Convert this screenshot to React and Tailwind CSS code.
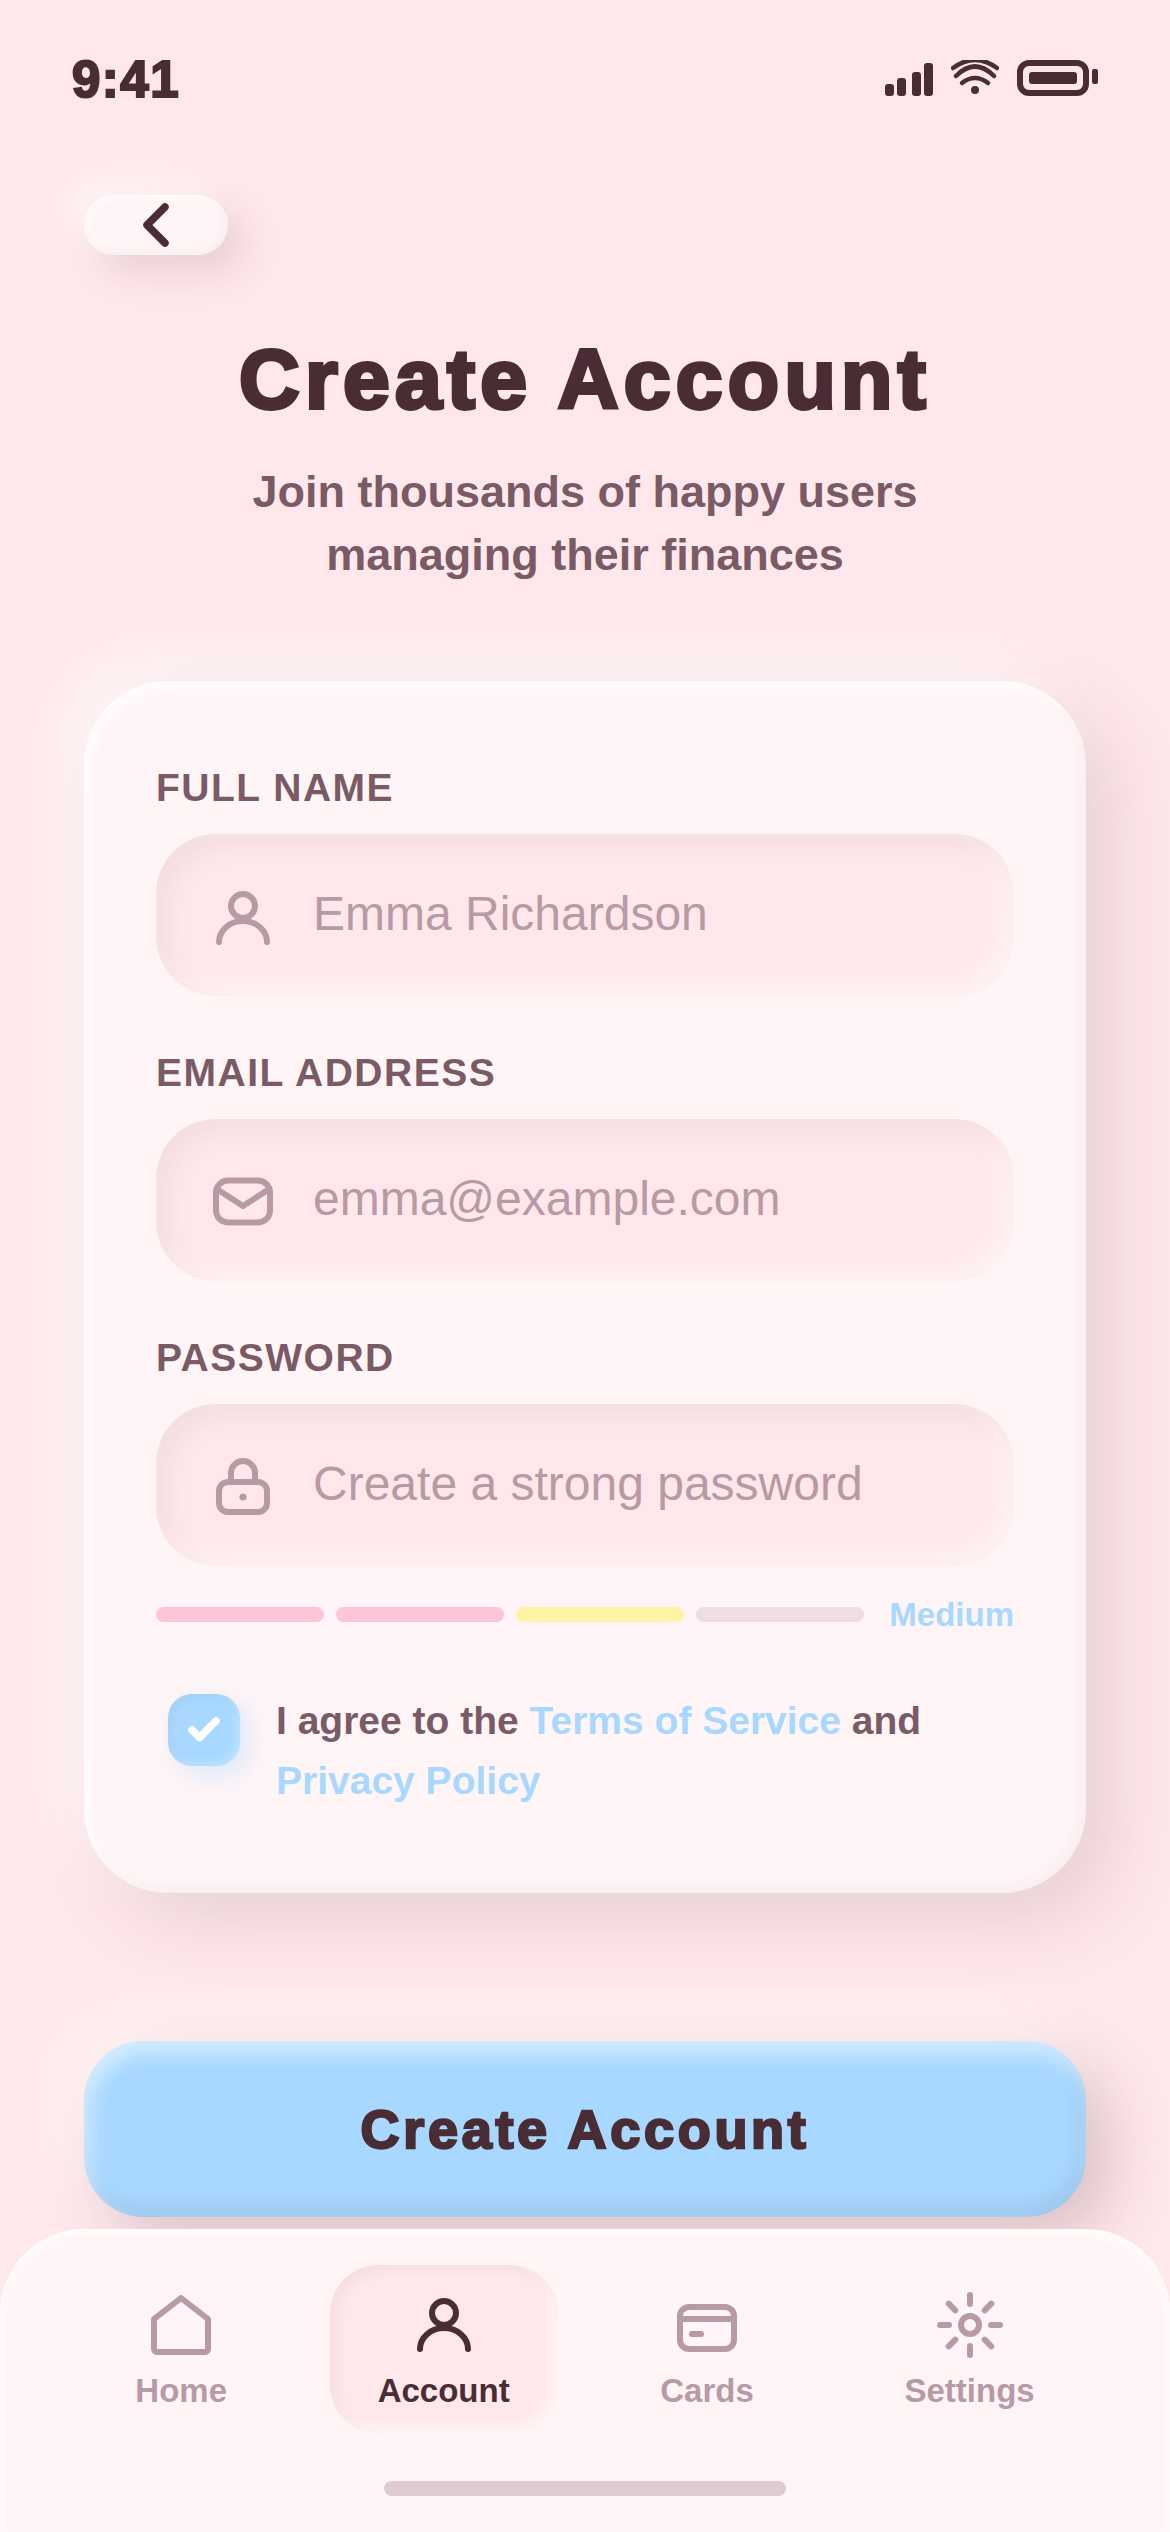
import React from "react";

const dark = "#4a2c35";

const Field = ({ label, placeholder, icon }) => (
  <div className="mb-[54px]">
    <div className="text-[39px] leading-[45px] font-bold tracking-[1.5px] text-[#7a5a65] mb-[24px]">{label}</div>
    <div className="h-[162px] rounded-[60px] bg-[#ffe8eb] flex items-center pl-[51px] shadow-[inset_12px_12px_24px_rgba(74,44,53,0.06),inset_-12px_-12px_24px_rgba(255,255,255,0.45)]">
      <div className="w-[72px] h-[72px] mt-[6px]">{icon}</div>
      <span className="ml-[34px] -mt-[2px] text-[48px] text-[#b89aa5]">{placeholder}</span>
    </div>
  </div>
);

const iconProps = {
  fill: "none",
  stroke: "currentColor",
  strokeWidth: 2,
  strokeLinecap: "round",
  strokeLinejoin: "round",
  viewBox: "0 0 24 24",
};

const UserIcon = ({ className }) => (
  <svg {...iconProps} className={className}>
    <circle cx="12" cy="8" r="4" />
    <path d="M4 20a8 7 0 0 1 16 0" />
  </svg>
);

const MailIcon = ({ className }) => (
  <svg {...iconProps} className={className}>
    <rect x="3" y="4.500" width="18" height="14" rx="4" />
    <path d="M3.500 7.500L12 13l8.500-5.500" />
  </svg>
);

const LockIcon = ({ className }) => (
  <svg {...iconProps} className={className}>
    <rect x="4" y="10" width="16" height="10" rx="3" />
    <path d="M8 10V7a4 4 0 0 1 8 0v3" />
    <circle cx="12" cy="15" r="1.200" fill="currentColor" stroke="none" />
  </svg>
);

const HomeIcon = ({ className }) => (
  <svg {...iconProps} className={className}>
    <path d="M3 10l9-7 9 7v10a1 1 0 0 1-1 1H4a1 1 0 0 1-1-1z" />
  </svg>
);

const CardIcon = ({ className }) => (
  <svg {...iconProps} className={className}>
    <rect x="3" y="6" width="18" height="14" rx="3" />
    <path d="M3 10h18M7 15h3" />
  </svg>
);

const GearIcon = ({ className }) => (
  <svg {...iconProps} className={className}>
    <circle cx="12" cy="12" r="3" />
    <path d="M12 2v3M12 19v3M4.900 4.900l2.200 2.200M16.900 16.900l2.200 2.200M2 12h3M19 12h3M4.900 19.100l2.200-2.200M16.900 7.100l2.200-2.200" />
  </svg>
);

const NavItem = ({ label, Icon, active }) => (
  <div
    className={`h-[168px] rounded-[48px] px-[48px] pt-[24px] flex flex-col items-center gap-[12px] ${
      active
        ? "bg-[#ffe8eb] text-[#4a2c35] shadow-[inset_6px_6px_12px_rgba(74,44,53,0.05),inset_-6px_-6px_12px_rgba(255,255,255,0.5)]"
        : "text-[#b89aa5]"
    }`}
  >
    <Icon className="w-[72px] h-[72px]" />
    <span className="text-[33px] leading-[36px] font-bold">{label}</span>
  </div>
);

export default function App() {
  return (
    <div className="relative w-[1170px] h-[2532px] overflow-hidden bg-[#ffe8eb] font-['Liberation_Sans',Arial,sans-serif]">
      {/* Status bar */}
      <div className="flex items-start justify-between pt-[54px] pl-[72px] pr-[72px] h-[132px]" style={{ color: dark }}>
        <span className="text-[51px] font-bold leading-[51px] tracking-[1.5px] [-webkit-text-stroke:2.200px_#4a2c35]">9:41</span>
        <div className="flex items-start gap-[18px] mt-[6px]">
          <svg width="48" height="36" viewBox="0 0 48 36" fill="currentColor">
            <rect x="0" y="24" width="9" height="12" rx="3" />
            <rect x="12" y="18" width="9" height="18" rx="3" />
            <rect x="27" y="12" width="9" height="24" rx="3" />
            <rect x="39" y="3" width="9" height="33" rx="3" />
          </svg>
          <svg width="48" height="36" viewBox="0 0 48 36" fill="none" stroke="currentColor" strokeWidth="4.500" strokeLinecap="round">
            <path d="M2 8Q24 -8 46 8" />
            <path d="M5 16Q24 -3 43 16" />
            <path d="M11 23Q24 13 37 23" />
            <circle cx="24" cy="30" r="4" fill="currentColor" stroke="none" />
          </svg>
          <svg width="81" height="36" viewBox="0 0 81 36" fill="currentColor">
            <rect x="3" y="3" width="66" height="30" rx="9" fill="none" stroke="currentColor" strokeWidth="6" />
            <rect x="12" y="12" width="48" height="12" rx="3" />
            <rect x="75" y="9" width="6" height="15" rx="2" />
          </svg>
        </div>
      </div>

      {/* Back button */}
      <div className="ml-[84px] mt-[63px] w-[144px] h-[60px] rounded-[30px] bg-[#fff5f7] flex items-center justify-center shadow-[18px_18px_36px_rgba(74,44,53,0.12),-18px_-18px_36px_rgba(255,255,255,0.5),inset_3px_3px_9px_rgba(255,255,255,0.6),inset_-3px_-3px_9px_rgba(74,44,53,0.04)]" style={{ color: dark }}>
        <svg width="72" height="72" viewBox="0 0 24 24" fill="none" stroke="currentColor" strokeWidth="2.500" strokeLinecap="round" strokeLinejoin="round" className="shrink-0">
          <path d="M15 6l-6 6 6 6" />
        </svg>
      </div>

      {/* Heading */}
      <div className="mt-[78px] text-center">
        <h1 className="text-[84px] leading-[93px] font-bold tracking-[5.300px] text-[#4a2c35] [-webkit-text-stroke:3.800px_#4a2c35]">Create Account</h1>
        <p className="mt-[34px] text-[45px] leading-[63px] font-bold text-[#7a5a65]">
          Join thousands of happy users
          <br />
          managing their finances
        </p>
      </div>

      {/* Form card */}
      <div className="mx-[84px] mt-[95px] h-[1212px] rounded-[84px] bg-[#fff5f7] px-[72px] pt-[84px] shadow-[30px_30px_72px_rgba(74,44,53,0.12),-24px_-24px_60px_rgba(255,255,255,0.6),inset_6px_6px_12px_rgba(255,255,255,0.8),inset_-6px_-6px_12px_rgba(74,44,53,0.03)]">
        <Field label="FULL NAME" placeholder="Emma Richardson" icon={<UserIcon className="w-[72px] h-[72px] text-[#b89aa5]" />} />
        <Field label="EMAIL ADDRESS" placeholder="emma@example.com" icon={<MailIcon className="w-[72px] h-[72px] text-[#b89aa5]" />} />
        <Field label="PASSWORD" placeholder="Create a strong password" icon={<LockIcon className="w-[72px] h-[72px] text-[#b89aa5]" />} />

        <div className="flex items-center gap-[12px] -mt-[30px]">
          <div className="w-[168px] h-[15px] rounded-full bg-[#ffc4d6]" />
          <div className="w-[168px] h-[15px] rounded-full bg-[#ffc4d6]" />
          <div className="w-[168px] h-[15px] rounded-full bg-[#fff3a8]" />
          <div className="w-[168px] h-[15px] rounded-full bg-[#f0dde2]" />
          <span className="ml-auto text-[33px] font-bold text-[#a8d8ff]">Medium</span>
        </div>

        <div className="flex mt-[54px] pl-[12px] gap-[36px]">
          <div className="shrink-0 w-[72px] h-[72px] rounded-[24px] bg-[#a8d8ff] flex items-center justify-center shadow-[9px_9px_24px_rgba(168,216,255,0.4),inset_3px_3px_9px_rgba(74,44,53,0.05),inset_-3px_-3px_9px_rgba(255,255,255,0.3)]">
            <svg width="36" height="36" viewBox="0 0 24 24" fill="none" stroke="#ffffff" strokeWidth="5" strokeLinecap="round" strokeLinejoin="round">
              <path d="M20 6L9 17l-5-5" />
            </svg>
          </div>
          <p className="-mt-[3px] text-[39px] leading-[60px] font-bold text-[#7a5a65]">
            I agree to the <span className="text-[#a8d8ff]">Terms of Service</span> and
            <br />
            <span className="text-[#a8d8ff]">Privacy Policy</span>
          </p>
        </div>
      </div>

      {/* Submit */}
      <div className="mx-[84px] mt-[148px] h-[176px] rounded-[60px] bg-[#a8d8ff] flex items-center justify-center shadow-[24px_24px_60px_rgba(74,44,53,0.2),-24px_-24px_60px_rgba(255,255,255,0.5),inset_6px_12px_18px_rgba(255,255,255,0.5),inset_-6px_-12px_18px_rgba(74,44,53,0.09)]">
        <span className="text-[54px] font-bold tracking-[3.700px] text-[#4a2c35] [-webkit-text-stroke:2.400px_#4a2c35]">Create Account</span>
      </div>

      {/* Bottom nav */}
      <div className="absolute left-0 right-0 bottom-0 h-[303px] rounded-t-[84px] bg-[#fff5f7] shadow-[inset_0_6px_12px_rgba(255,255,255,0.8)]">
        <div className="flex justify-around px-[60px] pt-[36px]">
          <NavItem label="Home" Icon={HomeIcon} />
          <NavItem label="Account" Icon={UserIcon} active />
          <NavItem label="Cards" Icon={CardIcon} />
          <NavItem label="Settings" Icon={GearIcon} />
        </div>
        <div className="absolute left-[384px] bottom-[36px] w-[402px] h-[15px] rounded-full bg-[#dccbcf]" />
      </div>
    </div>
  );
}
